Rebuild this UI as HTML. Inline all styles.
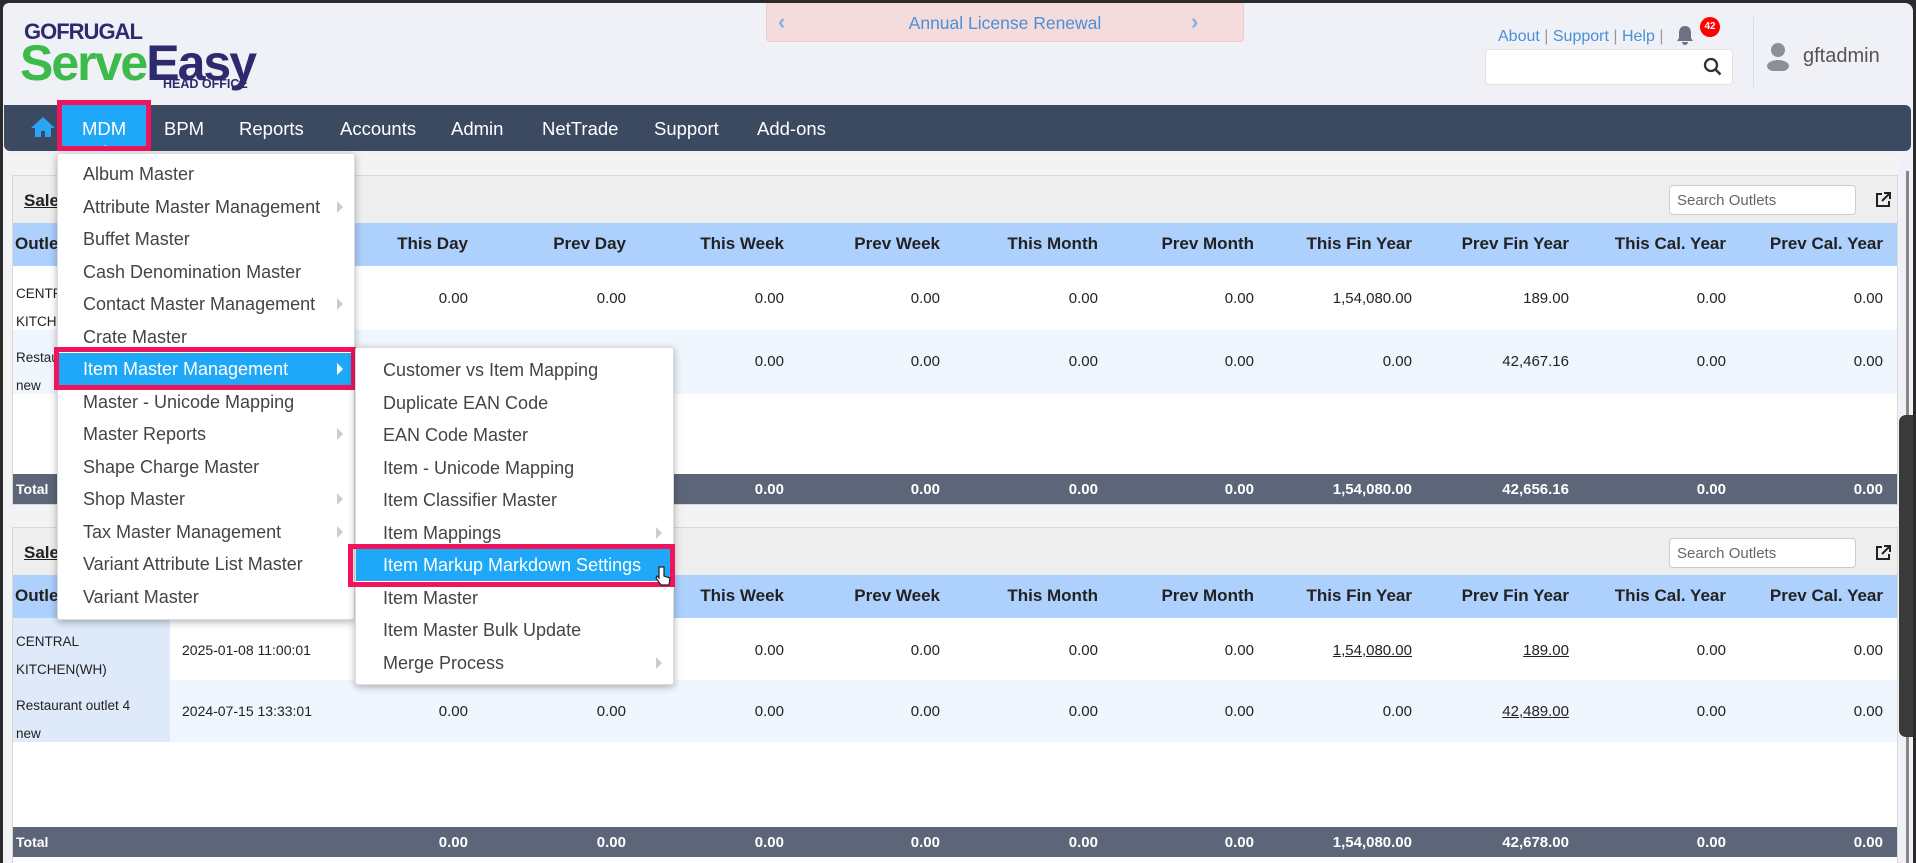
<!DOCTYPE html>
<html><head><meta charset="utf-8">
<style>
*{box-sizing:border-box;margin:0;padding:0}
body{width:1916px;height:856px;overflow:hidden;background:#2b2b2b;font-family:"Liberation Sans",sans-serif;position:relative}
.abs{position:absolute}
#win{position:absolute;left:3px;top:3px;width:1910px;height:860px;background:#f0f1f6;border-radius:6px 8px 0 0;overflow:hidden}
.nav{position:absolute;left:1px;top:102px;width:1907px;height:46px;background:#3b4a60;border-radius:0 6px 6px 6px}
.nav span{position:absolute;top:13px;color:#fff;font-size:18.5px}
.content{position:absolute;left:0;top:152px;width:1896px;height:710px;background:#f3f3f3}
.panel{position:absolute;left:9px;width:1886px;background:#fff;border:1px solid #d8d8d8}
.ph{position:absolute;left:0;top:0;width:100%;height:47px;background:#eeeeee}
.thd{position:absolute;left:0;width:100%;height:43px;background:#add0fd}
.tot{position:absolute;left:0;width:100%;height:30px;background:#5c6678}
.c{position:absolute;font-size:15px;color:#222;text-align:right;width:150px}
.h{position:absolute;font-size:17px;font-weight:bold;color:#222;text-align:right;width:150px}
.t{position:absolute;font-size:15px;font-weight:bold;color:#fff;text-align:right;width:150px}
.menu{position:absolute;background:#fff;box-shadow:0 2px 8px rgba(0,0,0,.3);border:1px solid #ddd;border-radius:3px}
.mi{position:absolute;left:0;width:100%;height:32px;font-size:18px;color:#444;line-height:32px}
.arr{position:absolute;width:0;height:0;border-left:6px solid #ccc;border-top:6px solid transparent;border-bottom:6px solid transparent;top:10px}
.so{position:absolute;width:187px;height:30px;background:#fff;border:1px solid #ccc;border-radius:4px;font-size:15px;color:#666;padding:6px 7px}
</style></head><body>
<div id="win">
  <div class="abs" style="left:21px;top:16px;font-size:22px;color:#2d2a6e;font-weight:bold;letter-spacing:-1px">GOFRUGAL</div>
  <div class="abs" style="left:17px;top:32px;font-size:50px;font-weight:bold;letter-spacing:-2px;line-height:56px"><span style="color:#3cba4a">Serve</span><span style="color:#2d2a6e">Easy</span></div>
  <div class="abs" style="left:160px;top:74px;font-size:12.5px;font-weight:bold;color:#2d2a6e">HEAD OFFICE</div>
  <div class="abs" style="left:763px;top:-1px;width:478px;height:40px;background:#f4dcdc;border:1px solid #ecc;border-radius:4px"></div>
  <div class="abs" style="left:775px;top:6px;color:#8aaee0;font-size:22px;font-weight:bold">&#8249;</div>
  <div class="abs" style="left:1188px;top:6px;color:#8aaee0;font-size:22px;font-weight:bold">&#8250;</div>
  <div class="abs" style="left:763px;top:10px;width:478px;text-align:center;color:#4a8fd8;font-size:17.5px">Annual License Renewal</div>
  <div class="abs" style="left:1495px;top:25px;font-size:16px;color:#4a8fd8">About <span style="color:#999">|</span> Support <span style="color:#999">|</span> Help <span style="color:#999">|</span></div>
  <svg class="abs" style="left:1673px;top:22px" width="18" height="20" viewBox="0 0 18 20"><path d="M9 1c-4 0-6 3-6 7v5l-2 3h16l-2-3V8c0-4-2-7-6-7z M6 17a3 3 0 0 0 6 0z" fill="#6c7280"/></svg>
  <div class="abs" style="left:1697px;top:14px;width:20px;height:20px;border-radius:50%;background:#f00;color:#fff;font-size:10px;font-weight:bold;text-align:center;line-height:20px">42</div>
  <div class="abs" style="left:1482px;top:46px;width:248px;height:36px;background:#fff;border:1px solid #e2e2e2;border-radius:4px"></div>
  <svg class="abs" style="left:1700px;top:54px" width="20" height="20" viewBox="0 0 20 20"><circle cx="8" cy="8" r="6" fill="none" stroke="#333" stroke-width="2.3"/><path d="M12.5 12.5l5 5" stroke="#333" stroke-width="2.6"/></svg>
  <div class="abs" style="left:1750px;top:14px;width:1px;height:70px;background:#dcdce4"></div>
  <svg class="abs" style="left:1762px;top:38px" width="26" height="30" viewBox="0 0 26 30"><circle cx="13" cy="9" r="7" fill="#8c8f9a"/><ellipse cx="13" cy="25" rx="11" ry="6" fill="#8c8f9a"/></svg>
  <div class="abs" style="left:1800px;top:42px;font-size:20px;color:#555">gftadmin</div>
  <div class="nav">
    <svg class="abs" style="left:26px;top:11px" width="26" height="22" viewBox="0 0 26 22"><path d="M13 1L1 12h4v9h6v-6h4v6h6v-9h4z" fill="#2aa4f4"/></svg>
    <div class="abs" style="left:58px;top:0;width:86px;height:46px;background:#1ea8f7"></div>
    <div class="abs" style="left:95px;top:40px;width:0;height:0;border-left:6px solid transparent;border-right:6px solid transparent;border-bottom:6px solid #fff"></div>
    <span style="left:78px">MDM</span><span style="left:160px">BPM</span><span style="left:235px">Reports</span><span style="left:336px">Accounts</span><span style="left:447px">Admin</span><span style="left:538px">NetTrade</span><span style="left:650px">Support</span><span style="left:753px">Add-ons</span>
  </div>
  <div class="abs" style="left:54px;top:97px;width:94px;height:51px;border:5px solid #f0145a"></div>
  <div class="content">
    <div class="panel" style="top:20px;height:330px">
      <div class="ph"></div>
      <div class="abs" style="left:11px;top:15px;font-size:17px;font-weight:bold;text-decoration:underline;color:#222">Sales</div>
      <div class="so" style="left:1656px;top:9px">Search Outlets</div>
      <svg class="abs" style="left:1862px;top:16px" width="16" height="16" viewBox="0 0 16 16"><path d="M7 2H2v12h12V9" fill="none" stroke="#222" stroke-width="2"/><path d="M9 1h6v6M15 1L7 9" fill="none" stroke="#222" stroke-width="2"/></svg>
      <div class="thd" style="top:47px"></div>
      <div class="h" style="left:2px;top:58px;text-align:left">Outlet</div>
      <div class="abs" style="left:0;top:90px;width:100%;height:64px;background:#fff"></div>
      <div class="abs" style="left:0;top:154px;width:100%;height:64px;background:#f0f6fe"></div>
      <div class="abs" style="left:3px;top:104px;font-size:13.5px;color:#222;line-height:28px">CENTRAL<br>KITCHEN</div>
      <div class="abs" style="left:3px;top:168px;font-size:13.5px;color:#222;line-height:28px">Restaurant<br>new</div>
      <div class="tot" style="top:298px"></div>
      <div class="abs" style="left:3px;top:305px;font-size:14px;font-weight:bold;color:#fff">Total</div>
      <div class="h" style="left:305px;top:58px">This Day</div><div class="h" style="left:463px;top:58px">Prev Day</div><div class="h" style="left:621px;top:58px">This Week</div><div class="h" style="left:777px;top:58px">Prev Week</div><div class="h" style="left:935px;top:58px">This Month</div><div class="h" style="left:1091px;top:58px">Prev Month</div><div class="h" style="left:1249px;top:58px">This Fin Year</div><div class="h" style="left:1406px;top:58px">Prev Fin Year</div><div class="h" style="left:1563px;top:58px">This Cal. Year</div><div class="h" style="left:1720px;top:58px">Prev Cal. Year</div>
      <div class="c" style="left:305px;top:114px">0.00</div><div class="c" style="left:463px;top:114px">0.00</div><div class="c" style="left:621px;top:114px">0.00</div><div class="c" style="left:777px;top:114px">0.00</div><div class="c" style="left:935px;top:114px">0.00</div><div class="c" style="left:1091px;top:114px">0.00</div><div class="c" style="left:1249px;top:114px">1,54,080.00</div><div class="c" style="left:1406px;top:114px">189.00</div><div class="c" style="left:1563px;top:114px">0.00</div><div class="c" style="left:1720px;top:114px">0.00</div>
      <div class="c" style="left:621px;top:177px">0.00</div><div class="c" style="left:777px;top:177px">0.00</div><div class="c" style="left:935px;top:177px">0.00</div><div class="c" style="left:1091px;top:177px">0.00</div><div class="c" style="left:1249px;top:177px">0.00</div><div class="c" style="left:1406px;top:177px">42,467.16</div><div class="c" style="left:1563px;top:177px">0.00</div><div class="c" style="left:1720px;top:177px">0.00</div>
      <div class="t" style="left:621px;top:305px">0.00</div><div class="t" style="left:777px;top:305px">0.00</div><div class="t" style="left:935px;top:305px">0.00</div><div class="t" style="left:1091px;top:305px">0.00</div><div class="t" style="left:1249px;top:305px">1,54,080.00</div><div class="t" style="left:1406px;top:305px">42,656.16</div><div class="t" style="left:1563px;top:305px">0.00</div><div class="t" style="left:1720px;top:305px">0.00</div>
    </div>
    <div class="panel" style="top:372px;height:340px">
      <div class="ph"></div>
      <div class="abs" style="left:11px;top:15px;font-size:17px;font-weight:bold;text-decoration:underline;color:#222">Sales</div>
      <div class="so" style="left:1656px;top:10px">Search Outlets</div>
      <svg class="abs" style="left:1862px;top:17px" width="16" height="16" viewBox="0 0 16 16"><path d="M7 2H2v12h12V9" fill="none" stroke="#222" stroke-width="2"/><path d="M9 1h6v6M15 1L7 9" fill="none" stroke="#222" stroke-width="2"/></svg>
      <div class="thd" style="top:47px"></div>
      <div class="h" style="left:2px;top:58px;text-align:left">Outlet</div>
      <div class="abs" style="left:0;top:90px;width:100%;height:62px;background:#fff"></div>
      <div class="abs" style="left:0;top:152px;width:100%;height:62px;background:#f0f6fe"></div>
      <div class="abs" style="left:0;top:90px;width:157px;height:124px;background:#deeaf9"></div>
      <div class="abs" style="left:3px;top:100px;font-size:13.5px;color:#222;line-height:28px">CENTRAL<br>KITCHEN(WH)</div>
      <div class="abs" style="left:3px;top:164px;font-size:13.5px;color:#222;line-height:28px">Restaurant outlet 4<br>new</div>
      <div class="abs" style="left:169px;top:114px;font-size:14px;color:#222">2025-01-08 11:00:01</div>
      <div class="abs" style="left:169px;top:175px;font-size:14px;color:#222">2024-07-15 13:33:01</div>
      <div class="tot" style="top:299px"></div>
      <div class="abs" style="left:3px;top:306px;font-size:14px;font-weight:bold;color:#fff">Total</div>
      <div class="h" style="left:621px;top:58px">This Week</div><div class="h" style="left:777px;top:58px">Prev Week</div><div class="h" style="left:935px;top:58px">This Month</div><div class="h" style="left:1091px;top:58px">Prev Month</div><div class="h" style="left:1249px;top:58px">This Fin Year</div><div class="h" style="left:1406px;top:58px">Prev Fin Year</div><div class="h" style="left:1563px;top:58px">This Cal. Year</div><div class="h" style="left:1720px;top:58px">Prev Cal. Year</div>
      <div class="c" style="left:621px;top:114px">0.00</div><div class="c" style="left:777px;top:114px">0.00</div><div class="c" style="left:935px;top:114px">0.00</div><div class="c" style="left:1091px;top:114px">0.00</div><div class="c" style="left:1249px;top:114px;text-decoration:underline">1,54,080.00</div><div class="c" style="left:1406px;top:114px;text-decoration:underline">189.00</div><div class="c" style="left:1563px;top:114px">0.00</div><div class="c" style="left:1720px;top:114px">0.00</div>
      <div class="c" style="left:305px;top:175px">0.00</div><div class="c" style="left:463px;top:175px">0.00</div><div class="c" style="left:621px;top:175px">0.00</div><div class="c" style="left:777px;top:175px">0.00</div><div class="c" style="left:935px;top:175px">0.00</div><div class="c" style="left:1091px;top:175px">0.00</div><div class="c" style="left:1249px;top:175px">0.00</div><div class="c" style="left:1406px;top:175px;text-decoration:underline">42,489.00</div><div class="c" style="left:1563px;top:175px">0.00</div><div class="c" style="left:1720px;top:175px">0.00</div>
      <div class="t" style="left:305px;top:306px">0.00</div><div class="t" style="left:463px;top:306px">0.00</div><div class="t" style="left:621px;top:306px">0.00</div><div class="t" style="left:777px;top:306px">0.00</div><div class="t" style="left:935px;top:306px">0.00</div><div class="t" style="left:1091px;top:306px">0.00</div><div class="t" style="left:1249px;top:306px">1,54,080.00</div><div class="t" style="left:1406px;top:306px">42,678.00</div><div class="t" style="left:1563px;top:306px">0.00</div><div class="t" style="left:1720px;top:306px">0.00</div>
    </div>
  </div>
  <div class="abs" style="left:1903px;top:168px;width:3px;height:700px;background:#888"></div>
  <div class="abs" style="left:1896px;top:412px;width:14px;height:322px;background:#3a3a3a;border-radius:7px 0 0 7px"></div>
  <div class="menu" style="left:54px;top:150px;width:298px;height:467px">
    <div class="mi" style="top:4px"><span style="margin-left:25px">Album Master</span></div>
    <div class="mi" style="top:37px"><span style="margin-left:25px">Attribute Master Management</span><i class="arr" style="left:279px"></i></div>
    <div class="mi" style="top:69px"><span style="margin-left:25px">Buffet Master</span></div>
    <div class="mi" style="top:102px"><span style="margin-left:25px">Cash Denomination Master</span></div>
    <div class="mi" style="top:134px"><span style="margin-left:25px">Contact Master Management</span><i class="arr" style="left:279px"></i></div>
    <div class="mi" style="top:167px"><span style="margin-left:25px">Crate Master</span></div>
    <div class="mi" style="top:199px;background:#1ea8f7;color:#fff"><span style="margin-left:25px">Item Master Management</span><i class="arr" style="left:279px;border-left-color:#fff"></i></div>
    <div class="mi" style="top:232px"><span style="margin-left:25px">Master - Unicode Mapping</span></div>
    <div class="mi" style="top:264px"><span style="margin-left:25px">Master Reports</span><i class="arr" style="left:279px"></i></div>
    <div class="mi" style="top:297px"><span style="margin-left:25px">Shape Charge Master</span></div>
    <div class="mi" style="top:329px"><span style="margin-left:25px">Shop Master</span><i class="arr" style="left:279px"></i></div>
    <div class="mi" style="top:362px"><span style="margin-left:25px">Tax Master Management</span><i class="arr" style="left:279px"></i></div>
    <div class="mi" style="top:394px"><span style="margin-left:25px">Variant Attribute List Master</span></div>
    <div class="mi" style="top:427px"><span style="margin-left:25px">Variant Master</span></div>
  </div>
  <div class="abs" style="left:51px;top:344px;width:302px;height:43px;border:5px solid #f0145a"></div>
  <div class="menu" style="left:352px;top:344px;width:319px;height:338px">
    <div class="mi" style="top:6px"><span style="margin-left:27px">Customer vs Item Mapping</span></div>
    <div class="mi" style="top:39px"><span style="margin-left:27px">Duplicate EAN Code</span></div>
    <div class="mi" style="top:71px"><span style="margin-left:27px">EAN Code Master</span></div>
    <div class="mi" style="top:104px"><span style="margin-left:27px">Item - Unicode Mapping</span></div>
    <div class="mi" style="top:136px"><span style="margin-left:27px">Item Classifier Master</span></div>
    <div class="mi" style="top:169px"><span style="margin-left:27px">Item Mappings</span><i class="arr" style="left:300px"></i></div>
    <div class="mi" style="top:201px;background:#1ea8f7;color:#fff"><span style="margin-left:27px">Item Markup Markdown Settings</span></div>
    <div class="mi" style="top:234px"><span style="margin-left:27px">Item Master</span></div>
    <div class="mi" style="top:266px"><span style="margin-left:27px">Item Master Bulk Update</span></div>
    <div class="mi" style="top:299px"><span style="margin-left:27px">Merge Process</span><i class="arr" style="left:300px"></i></div>
  </div>
  <div class="abs" style="left:345px;top:541px;width:327px;height:43px;border:5px solid #f0145a"></div>
  <svg class="abs" style="left:652px;top:562px" width="16" height="22" viewBox="0 0 16 22"><path d="M4 2v11l-2-2-1 2 5 7h8l1-7-6-2V2z" fill="#fff" stroke="#222" stroke-width="1.2"/></svg>
</div>
</body></html>
